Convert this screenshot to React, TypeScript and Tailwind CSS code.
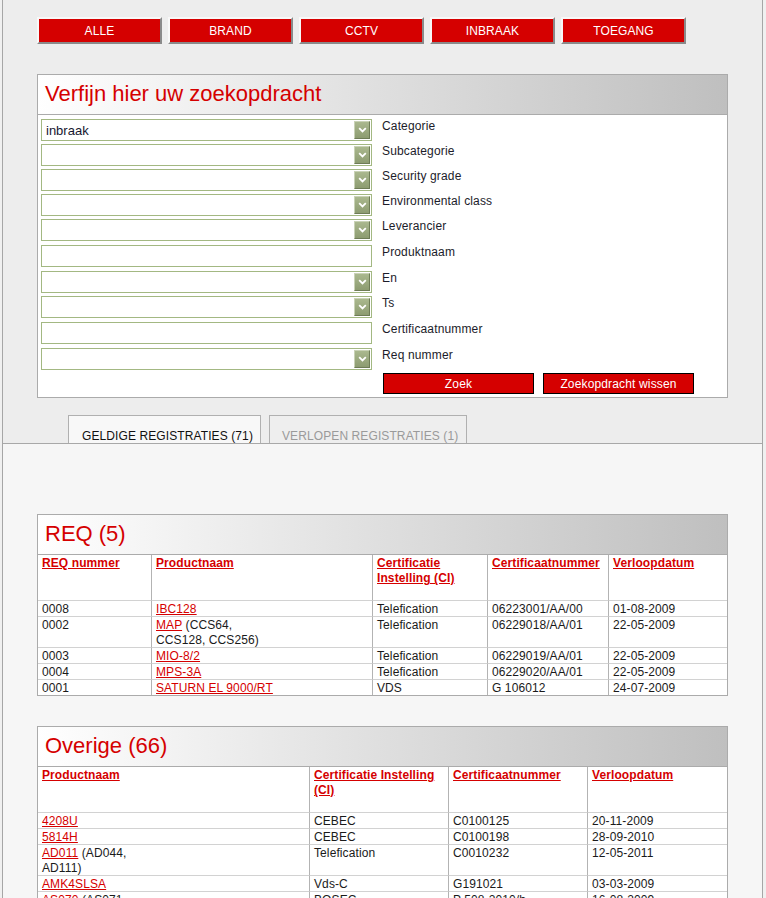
import React from "react";

const navItems = ["ALLE", "BRAND", "CCTV", "INBRAAK", "TOEGANG"];

type FormRow = { kind: "select" | "text"; label: string; h: string; value?: string };

const formRows: FormRow[] = [
  { kind: "select", label: "Categorie", h: "h-[25px]", value: "inbraak" },
  { kind: "select", label: "Subcategorie", h: "h-[25px]" },
  { kind: "select", label: "Security grade", h: "h-[25px]" },
  { kind: "select", label: "Environmental class", h: "h-[25px]" },
  { kind: "select", label: "Leverancier", h: "h-[26px]" },
  { kind: "text", label: "Produktnaam", h: "h-[26px]" },
  { kind: "select", label: "En", h: "h-[25px]" },
  { kind: "select", label: "Ts", h: "h-[26px]" },
  { kind: "text", label: "Certificaatnummer", h: "h-[26px]" },
  { kind: "select", label: "Req nummer", h: "h-[25px]" },
];

function FakeSelect({ value }: { value?: string }) {
  return (
    <div className="relative flex h-[22px] w-[331px] shrink-0 items-center border border-[#a3b882] bg-white pl-[4px] text-[13px] leading-none text-[#161630]">
      <span>{value}</span>
      <div className="absolute right-[1px] top-[1px] flex h-[18px] w-[16px] items-center justify-center border border-t-[#c9d2b6] border-l-[#c9d2b6] border-b-[#6e7c56] border-r-[#6e7c56] bg-gradient-to-b from-[#aab88e] to-[#8d9c71]">
        <svg width="9" height="6" viewBox="0 0 9 6">
          <path d="M1.2 1.2 L4.5 4.5 L7.8 1.2" stroke="white" strokeWidth="1.8" fill="none" />
        </svg>
      </div>
    </div>
  );
}

function FakeInput() {
  return <div className="h-[22px] w-[331px] shrink-0 border border-[#a3b882] bg-white" />;
}

function Panel({ title, children }: { title: string; children: React.ReactNode }) {
  return (
    <div className="w-[691px] border border-[#ababab] bg-white">
      <div className="flex h-[40px] items-center border-b border-[#ababab] bg-gradient-to-r from-white to-[#bfbfbf] pl-[7px] pb-[2px] text-[22px] leading-none text-[#d50000]">
        {title}
      </div>
      {children}
    </div>
  );
}

type Cell = { link?: string; text?: string; text2?: string };
type Row = { h: string; cells: Cell[] };

function DataTable({
  cols,
  headers,
  rows,
}: {
  cols: string;
  headers: string[];
  rows: Row[];
}) {
  return (
    <div className={`grid ${cols}`}>
      {headers.map((h, i) => (
        <div
          key={"h" + i}
          className={`h-[45px] pl-[4px] pr-[2px] pt-[1px] text-[12px] font-bold leading-[15px] tracking-[0.1px] text-[#d50000] underline ${
            i > 0 ? "border-l border-[#b3b3b3]" : ""
          }`}
        >
          {h}
        </div>
      ))}
      {rows.map((r, ri) =>
        r.cells.map((c, ci) => (
          <div
            key={ri + "-" + ci}
            className={`${r.h} border-t border-t-[#d2d2d2] pl-[4px] pr-[2px] pt-[1px] text-[12px] leading-[15px] tracking-[0.1px] text-[#1a1a1a] ${
              ci > 0 ? "border-l border-l-[#b3b3b3]" : ""
            }`}
          >
            {c.link && <span className="text-[#d50000] underline">{c.link}</span>}
            {c.link && c.text ? " " : ""}
            {c.text}
            {c.text2 && (
              <>
                <br />
                {c.text2}
              </>
            )}
          </div>
        ))
      )}
    </div>
  );
}

const reqRows: Row[] = [
  { h: "h-[16px]", cells: [{ text: "0008" }, { link: "IBC128" }, { text: "Telefication" }, { text: "06223001/AA/00" }, { text: "01-08-2009" }] },
  { h: "h-[31px]", cells: [{ text: "0002" }, { link: "MAP", text: "(CCS64,", text2: "CCS128, CCS256)" }, { text: "Telefication" }, { text: "06229018/AA/01" }, { text: "22-05-2009" }] },
  { h: "h-[16px]", cells: [{ text: "0003" }, { link: "MIO-8/2" }, { text: "Telefication" }, { text: "06229019/AA/01" }, { text: "22-05-2009" }] },
  { h: "h-[16px]", cells: [{ text: "0004" }, { link: "MPS-3A" }, { text: "Telefication" }, { text: "06229020/AA/01" }, { text: "22-05-2009" }] },
  { h: "h-[16px]", cells: [{ text: "0001" }, { link: "SATURN EL 9000/RT" }, { text: "VDS" }, { text: "G 106012" }, { text: "24-07-2009" }] },
];

const overigeRows: Row[] = [
  { h: "h-[16px]", cells: [{ link: "4208U" }, { text: "CEBEC" }, { text: "C0100125" }, { text: "20-11-2009" }] },
  { h: "h-[16px]", cells: [{ link: "5814H" }, { text: "CEBEC" }, { text: "C0100198" }, { text: "28-09-2010" }] },
  { h: "h-[31px]", cells: [{ link: "AD011", text: "(AD044,", text2: "AD111)" }, { text: "Telefication" }, { text: "C0010232" }, { text: "12-05-2011" }] },
  { h: "h-[16px]", cells: [{ link: "AMK4SLSA" }, { text: "Vds-C" }, { text: "G191021" }, { text: "03-03-2009" }] },
  { h: "h-[31px]", cells: [{ link: "AS070", text: "(AS071,", text2: "AS072)" }, { text: "BOSEC" }, { text: "P 508-2010/b" }, { text: "16-08-2009" }] },
  { h: "h-[16px]", cells: [{ link: "ATS1201" }, { text: "BOSEC" }, { text: "P 312-2008" }, { text: "14-02-2010" }] },
  { h: "h-[16px]", cells: [{ link: "ATS2000" }, { text: "BOSEC" }, { text: "P 313-2008" }, { text: "14-02-2010" }] },
];

export default function App() {
  return (
    <div className="min-h-screen w-[766px] bg-[#f0f0f0] font-['Liberation_Sans',Arial,sans-serif]">
      <div className="ml-[2px] w-[761px] border-x border-[#a6a6a6]">
        {/* top section */}
        <div className="bg-[#ededed]">
          <div className="flex gap-[6px] pl-[34px] pt-[17px]">
            {navItems.map((n) => (
              <div
                key={n}
                className="flex h-[27px] w-[125px] items-center justify-center border-2 border-t-[#f8f8f8] border-l-[#f8f8f8] border-b-[#8a8a8a] border-r-[#8a8a8a] bg-[#d50000] text-[12px] tracking-[0.1px] text-white"
              >
                {n}
              </div>
            ))}
          </div>

          <div className="ml-[34px] mt-[30px]">
            <Panel title="Verfijn hier uw zoekopdracht">
              <div className="pl-[3px] pt-[4px] pb-[3px]">
                {formRows.map((r) => (
                  <div key={r.label} className={`flex ${r.h} items-start`}>
                    {r.kind === "select" ? <FakeSelect value={r.value} /> : <FakeInput />}
                    <div className="ml-[10px] text-[12px] leading-[15px] tracking-[0.15px] text-[#1c1c2a]">{r.label}</div>
                  </div>
                ))}
                <div className="flex gap-[9px] pl-[342px]">
                  <div className="flex h-[21px] w-[151px] items-center justify-center border border-black bg-[#d50000] text-[12px] tracking-[0.15px] text-white">
                    Zoek
                  </div>
                  <div className="flex h-[21px] w-[151px] items-center justify-center border border-black bg-[#d50000] text-[12px] tracking-[0.15px] text-white">
                    Zoekopdracht wissen
                  </div>
                </div>
              </div>
            </Panel>
          </div>

          <div className="mt-[17px] flex items-end gap-[8px] border-b border-[#a8a8a8] pl-[65px]">
            <div className="h-[28px] w-[193px] border border-b-0 border-[#b0b0b0] bg-[#f8f8f8] pl-[13px] pt-[13px] text-[12px] leading-[15px] tracking-[0.1px] text-[#111]">
              GELDIGE REGISTRATIES (71)
            </div>
            <div className="h-[28px] w-[198px] border border-b-0 border-[#b0b0b0] bg-[#eeeeee] pl-[12px] pt-[13px] text-[12px] leading-[15px] tracking-[0.1px] text-[#9a9a9a]">
              VERLOPEN REGISTRATIES (1)
            </div>
          </div>
        </div>

        {/* lower section */}
        <div className="bg-[#f6f6f6] pb-[40px] pl-[34px] pt-[70px]">
          <Panel title="REQ (5)">
            <DataTable
              cols="grid-cols-[113px_221px_115px_121px_119px]"
              headers={["REQ nummer", "Productnaam", "Certificatie Instelling (CI)", "Certificaatnummer", "Verloopdatum"]}
              rows={reqRows}
            />
          </Panel>
          <div className="mt-[30px]">
            <Panel title="Overige (66)">
              <DataTable
                cols="grid-cols-[271px_139px_139px_140px]"
                headers={["Productnaam", "Certificatie Instelling (CI)", "Certificaatnummer", "Verloopdatum"]}
                rows={overigeRows}
              />
            </Panel>
          </div>
        </div>
      </div>
    </div>
  );
}
